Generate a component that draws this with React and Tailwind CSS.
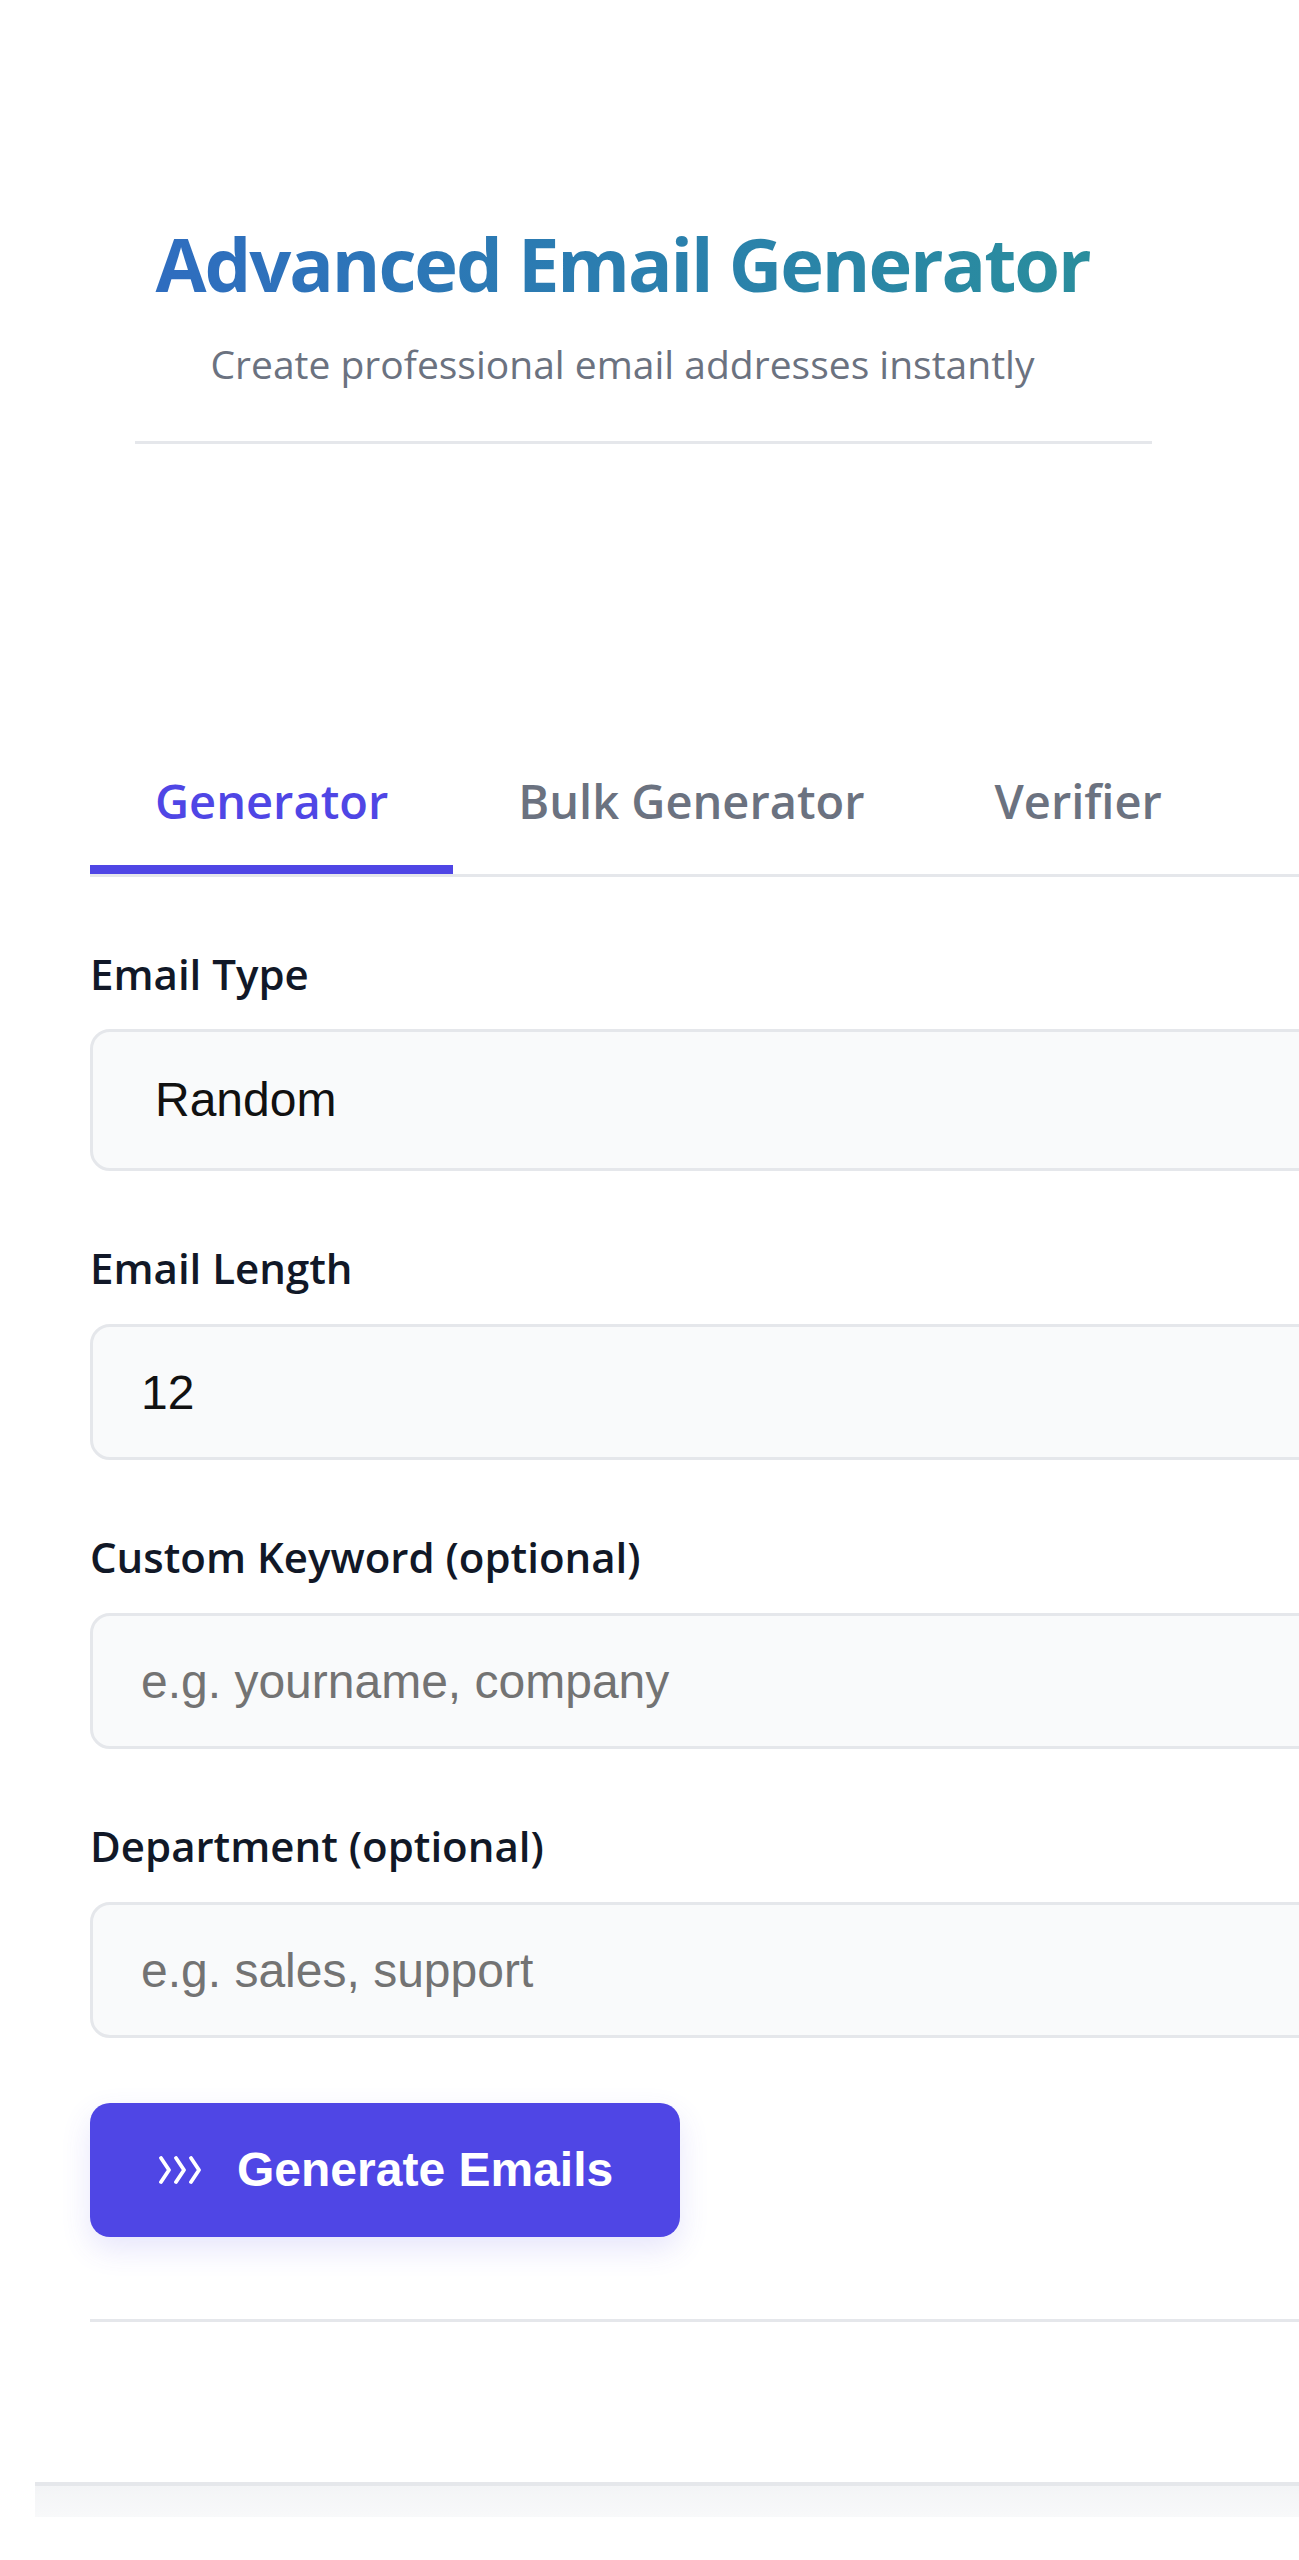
import { useState } from "react";

const fields = [
  { id: "length", label: "Email Length", value: "12" },
  { id: "keyword", label: "Custom Keyword (optional)", placeholder: "e.g. yourname, company" },
  { id: "department", label: "Department (optional)", placeholder: "e.g. sales, support" },
];

const tabs = ["Generator", "Bulk Generator", "Verifier"];

const Chevrons = () => (
  <svg width="46" height="28" viewBox="0 0 46 28" fill="none" stroke="currentColor" strokeWidth="3.8" strokeLinecap="round" strokeLinejoin="round">
    <polyline points="3,2 11,14 3,26" />
    <polyline points="18,2 26,14 18,26" />
    <polyline points="33,2 41,14 33,26" />
  </svg>
);

const App = () => {
  const [activeTab, setActiveTab] = useState("Generator");
  const [emailType, setEmailType] = useState("random");

  return (
    <div className="w-full h-[2560px] overflow-hidden bg-white font-['Open_Sans',sans-serif]">
      {/* Header */}
      <header className="ml-[135px] w-[1017px] pt-[221px] pb-[48px] border-b-[3px] border-[#e5e7eb]">
        <div className="pr-[42px] text-center">
          <h1 className="text-[74px] leading-[86px] font-bold tracking-[-0.028em] bg-linear-to-r from-[#2f6cc0] to-[#2a8e9c] bg-clip-text text-transparent">
            Advanced Email Generator
          </h1>
          <p className="mt-[28px] text-[39px] leading-[58px] text-[#6b7280]">
            Create professional email addresses instantly
          </p>
        </div>
      </header>

      {/* Generator panel */}
      <section className="ml-[90px] w-[1400px] pt-[293px]">
        <nav className="flex border-b-[3px] border-[#e5e7eb]">
          {tabs.map((tab) => (
            <button
              key={tab}
              onClick={() => setActiveTab(tab)}
              className={`px-[65px] pt-[28px] pb-[28px] border-b-[9px] text-[47px] leading-[72px] font-semibold font-['Open_Sans',sans-serif] ${
                activeTab === tab ? "border-[#4f46e5] text-[#4f46e5]" : "border-transparent text-[#6b7280]"
              }`}
            >
              {tab}
            </button>
          ))}
        </nav>

        <div className="pt-[65px]">
          <label className="block mb-[24px] text-[42px] leading-[63px] font-semibold text-[#111827]">
            Email Type
          </label>
          <select
            value={emailType}
            onChange={(e) => setEmailType(e.target.value)}
            className="block w-full h-[142px] appearance-none rounded-[20px] border-[3px] border-[#e5e7eb] bg-[#f9fafb] pl-[62px] text-[48px] text-[#111111] font-['Liberation_Sans',Arial,sans-serif] outline-none"
          >
            <option value="random">Random</option>
            <option value="name">Name Based</option>
            <option value="business">Business</option>
          </select>

          {fields.map((f) => (
            <div key={f.id} className="mt-[65px]">
              <label className="block mb-[25px] text-[42px] leading-[63px] font-semibold text-[#111827]">
                {f.label}
              </label>
              <input
                type="text"
                defaultValue={f.value}
                placeholder={f.placeholder}
                className="block w-full h-[136px] rounded-[20px] border-[3px] border-[#e5e7eb] bg-[#f9fafb] pl-[48px] text-[48px] text-[#111111] placeholder:text-[#737373] font-['Liberation_Sans',Arial,sans-serif] outline-none"
              />
            </div>
          ))}

          <button className="mt-[65px] flex items-center gap-[33px] w-[590px] h-[134px] pl-[68px] rounded-[20px] bg-[#4f46e5] text-white shadow-[0_12px_30px_rgba(79,70,229,0.14)] font-['Liberation_Sans',Arial,sans-serif] text-[48px] font-bold">
            <Chevrons />
            <span>Generate Emails</span>
          </button>

          <div className="mt-[82px] border-t-[3px] border-[#e5e7eb]" />
        </div>
      </section>

      <div className="ml-[35px] mt-[160px] h-[35px] border-t-4 border-[#e5e7eb] bg-linear-to-b from-[#f3f4f6] to-[#f8f9fa]" />
    </div>
  );
};

export default App;
